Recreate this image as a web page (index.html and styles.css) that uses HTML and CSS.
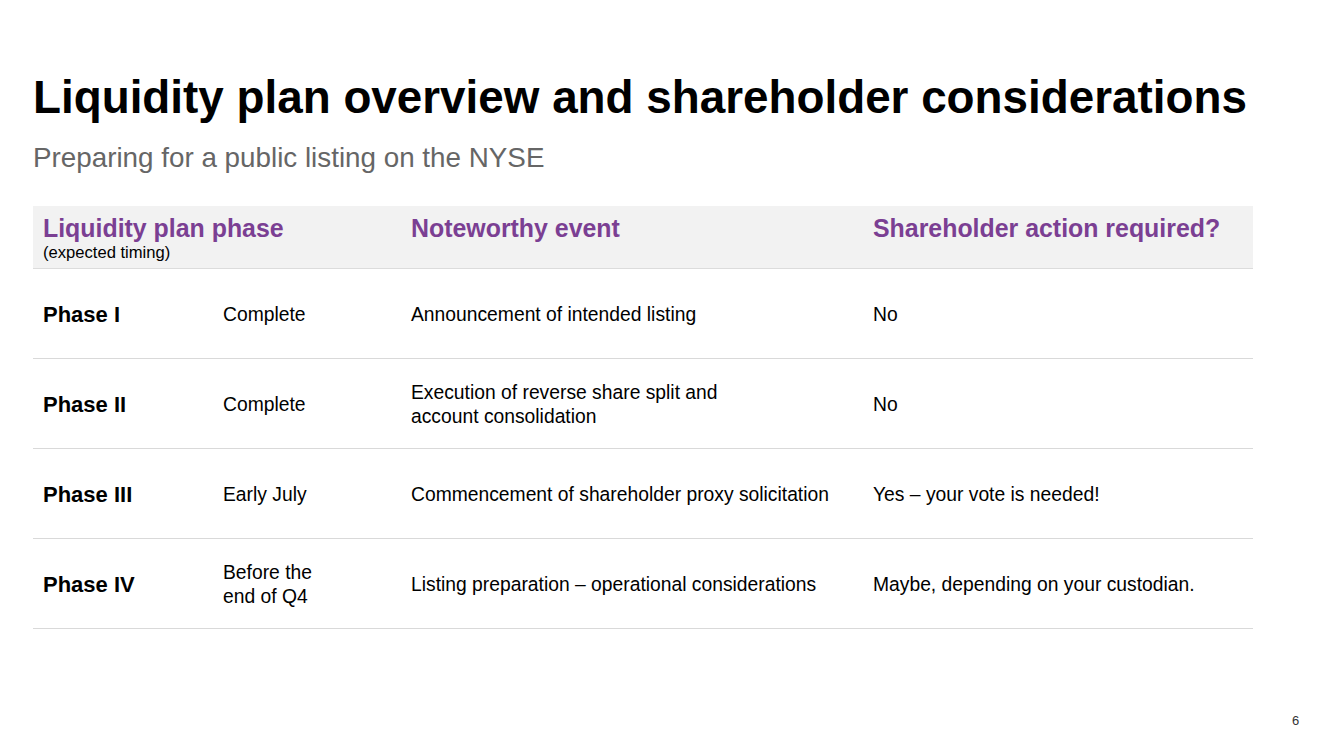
FILE: index.html
```html
<!DOCTYPE html>
<html>
<head>
<meta charset="utf-8">
<link rel="stylesheet" href="styles.css">
</head>
<body>
<div class="slide">
  <h1 class="title">Liquidity plan overview and shareholder considerations</h1>
  <p class="subtitle">Preparing for a public listing on the NYSE</p>
  <div class="table">
    <div class="row head">
      <div class="cell span2"><div class="h">Liquidity plan phase</div><div class="note">(expected timing)</div></div>
      <div class="cell"><div class="h">Noteworthy event</div></div>
      <div class="cell"><div class="h">Shareholder action required?</div></div>
    </div>
    <div class="row">
      <div class="cell phase">Phase I</div>
      <div class="cell">Complete</div>
      <div class="cell">Announcement of intended listing</div>
      <div class="cell">No</div>
    </div>
    <div class="row">
      <div class="cell phase">Phase II</div>
      <div class="cell">Complete</div>
      <div class="cell">Execution of reverse share split and<br>account consolidation</div>
      <div class="cell">No</div>
    </div>
    <div class="row">
      <div class="cell phase">Phase III</div>
      <div class="cell">Early July</div>
      <div class="cell">Commencement of shareholder proxy solicitation</div>
      <div class="cell">Yes – your vote is needed!</div>
    </div>
    <div class="row">
      <div class="cell phase">Phase IV</div>
      <div class="cell">Before the<br>end of Q4</div>
      <div class="cell">Listing preparation – operational considerations</div>
      <div class="cell">Maybe, depending on your custodian.</div>
    </div>
  </div>
  <div class="pagenum">6</div>
</div>
</body>
</html>
```
FILE: styles.css
```css
html, body {
  margin: 0;
  padding: 0;
  background: #ffffff;
}
body {
  font-family: "Liberation Sans", Arial, sans-serif;
  color: #000;
}
.slide {
  position: relative;
  width: 1333px;
  height: 749px;
  padding: 70px 0 0 33px;
  box-sizing: border-box;
}
.title {
  margin: 0;
  font-size: 45.8px;
  font-weight: bold;
  line-height: 56px;
}
.subtitle {
  margin: 15px 0 0 0;
  font-size: 27.8px;
  line-height: 34px;
  color: #666666;
}
.table {
  margin-top: 31px;
  width: 1220px;
}
.row {
  display: grid;
  grid-template-columns: 180px 188px 462px 390px;
  height: 89px;
  border-bottom: 1px solid #d9d9d9;
  align-items: center;
}
.row.head {
  height: 62px;
  background: #f2f2f2;
  align-items: start;
  border-bottom: 1px solid #dcdcdc;
}
.cell {
  padding-left: 10px;
  padding-top: 2px;
  font-size: 19.3px;
  line-height: 24px;
}
.cell.span2 {
  grid-column: span 2;
}
.head .cell {
  padding-top: 8px;
}
.h {
  color: #7b3f93;
  font-weight: bold;
  font-size: 24.9px;
  line-height: 28px;
}
.note {
  margin-top: 2px;
  font-size: 16.6px;
  line-height: 18px;
  color: #000;
}
.phase {
  font-weight: bold;
  font-size: 22px;
}
.pagenum {
  position: absolute;
  left: 1292px;
  top: 713px;
  font-size: 13px;
  color: #333;
}
```
